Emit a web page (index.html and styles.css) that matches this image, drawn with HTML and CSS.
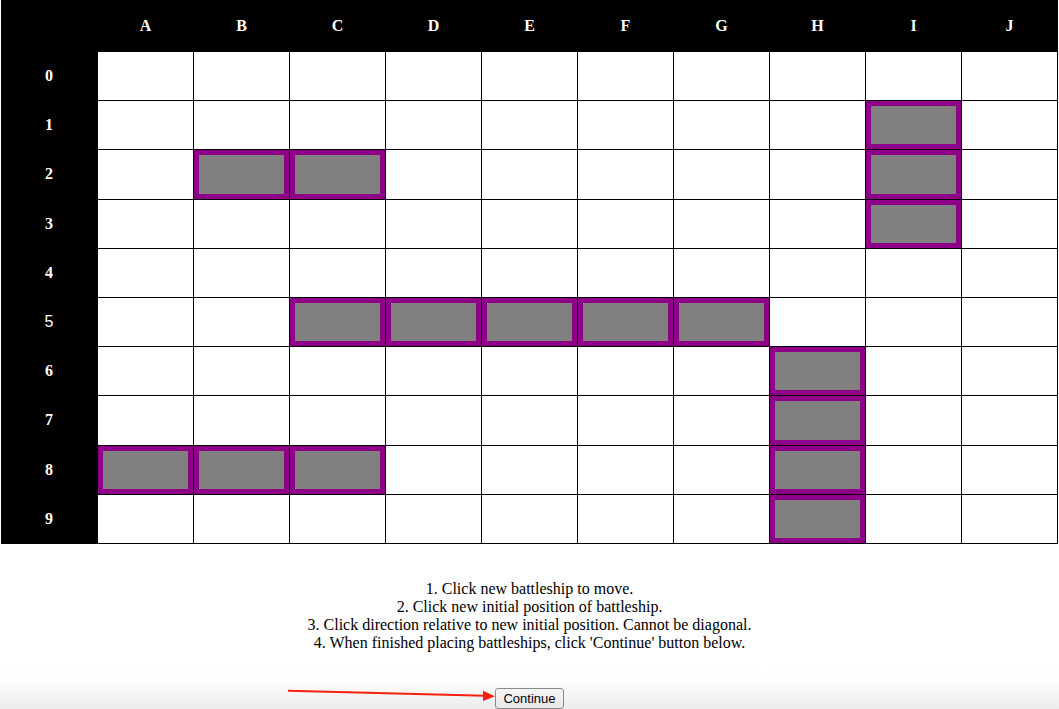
FILE: index.html
```html
<!DOCTYPE html>
<html>
<head>
<meta charset="utf-8">
<link rel="stylesheet" href="styles.css">
</head>
<body>
<div class="board">
  <div class="hd"></div>
  <div class="hd">A</div><div class="hd">B</div><div class="hd">C</div><div class="hd">D</div><div class="hd">E</div>
  <div class="hd">F</div><div class="hd">G</div><div class="hd">H</div><div class="hd">I</div><div class="hd">J</div>

  <div class="lbl">0</div>
  <div class="c"></div><div class="c"></div><div class="c"></div><div class="c"></div><div class="c"></div><div class="c"></div><div class="c"></div><div class="c"></div><div class="c"></div><div class="c"></div>

  <div class="lbl">1</div>
  <div class="c"></div><div class="c"></div><div class="c"></div><div class="c"></div><div class="c"></div><div class="c"></div><div class="c"></div><div class="c"></div><div class="c ship"></div><div class="c"></div>

  <div class="lbl">2</div>
  <div class="c"></div><div class="c ship"></div><div class="c ship"></div><div class="c"></div><div class="c"></div><div class="c"></div><div class="c"></div><div class="c"></div><div class="c ship"></div><div class="c"></div>

  <div class="lbl">3</div>
  <div class="c"></div><div class="c"></div><div class="c"></div><div class="c"></div><div class="c"></div><div class="c"></div><div class="c"></div><div class="c"></div><div class="c ship"></div><div class="c"></div>

  <div class="lbl">4</div>
  <div class="c"></div><div class="c"></div><div class="c"></div><div class="c"></div><div class="c"></div><div class="c"></div><div class="c"></div><div class="c"></div><div class="c"></div><div class="c"></div>

  <div class="lbl sans">5</div>
  <div class="c"></div><div class="c"></div><div class="c ship"></div><div class="c ship"></div><div class="c ship"></div><div class="c ship"></div><div class="c ship"></div><div class="c"></div><div class="c"></div><div class="c"></div>

  <div class="lbl">6</div>
  <div class="c"></div><div class="c"></div><div class="c"></div><div class="c"></div><div class="c"></div><div class="c"></div><div class="c"></div><div class="c ship"></div><div class="c"></div><div class="c"></div>

  <div class="lbl">7</div>
  <div class="c"></div><div class="c"></div><div class="c"></div><div class="c"></div><div class="c"></div><div class="c"></div><div class="c"></div><div class="c ship"></div><div class="c"></div><div class="c"></div>

  <div class="lbl">8</div>
  <div class="c ship"></div><div class="c ship"></div><div class="c ship"></div><div class="c"></div><div class="c"></div><div class="c"></div><div class="c"></div><div class="c ship"></div><div class="c"></div><div class="c"></div>

  <div class="lbl">9</div>
  <div class="c"></div><div class="c"></div><div class="c"></div><div class="c"></div><div class="c"></div><div class="c"></div><div class="c"></div><div class="c ship"></div><div class="c"></div><div class="c"></div>
</div>

<div class="instructions">
  <div>1. Click new battleship to move.</div>
  <div>2. Click new initial position of battleship.</div>
  <div>3. Click direction relative to new initial position. Cannot be diagonal.</div>
  <div>4. When finished placing battleships, click 'Continue' button below.</div>
</div>

<div class="footer">
  <button class="btn">Continue</button>
  <svg class="arrow" width="220" height="29" viewBox="0 0 220 29">
    <line x1="8" y1="11.8" x2="205" y2="16.8" stroke="#f5200e" stroke-width="2"/>
    <polygon points="203,11.8 215,17.2 203,22" fill="#f5200e"/>
  </svg>
</div>
</body>
</html>
```

FILE: styles.css
```css
html, body {
  margin: 0;
  padding: 0;
  background: #ffffff;
}

body {
  font-family: "Liberation Serif", "Times New Roman", serif;
  font-size: 16px;
  color: #000;
  width: 1059px;
  height: 709px;
  overflow: hidden;
}

.board {
  margin-left: 1px;
  width: 1056px;
  display: grid;
  grid-template-columns: 96px repeat(10, 95px);
  grid-template-rows: 51px repeat(10, 48.2px);
  column-gap: 1px;
  row-gap: 1px;
  padding: 0 1px 1px 0;
  background: #000;
}

.hd,
.lbl {
  display: flex;
  align-items: center;
  justify-content: center;
  color: #fff;
  font-weight: bold;
  font-size: 16px;
}

.lbl.sans {
  font-family: "Liberation Sans", Arial, sans-serif;
  font-weight: normal;
}

.c {
  background: #fff;
}

.c.ship {
  box-sizing: border-box;
  background: #808080;
  border: 5px solid #8e0088;
}

.instructions {
  padding-top: 36.5px;
  text-align: center;
  line-height: 17.8px;
}

.footer {
  position: relative;
  margin-top: 17px;
  height: 40px;
  box-sizing: border-box;
  padding-top: 19px;
  display: flex;
  justify-content: center;
  align-items: flex-start;
  background: linear-gradient(to bottom, #ffffff 0%, #fdfdfd 30%, #f3f3f3 70%, #ebebeb 100%);
}

.btn {
  font-family: "Liberation Sans", Arial, sans-serif;
  font-size: 13px;
  height: 21px;
  width: 69px;
  padding: 0;
  margin: 0;
  color: #000;
  background: linear-gradient(to bottom, #f6f6f6, #e8e8e8);
  border: 1px solid #8a8a8a;
  border-radius: 3px;
}

.arrow {
  position: absolute;
  left: 280px;
  top: 10px;
}
```
